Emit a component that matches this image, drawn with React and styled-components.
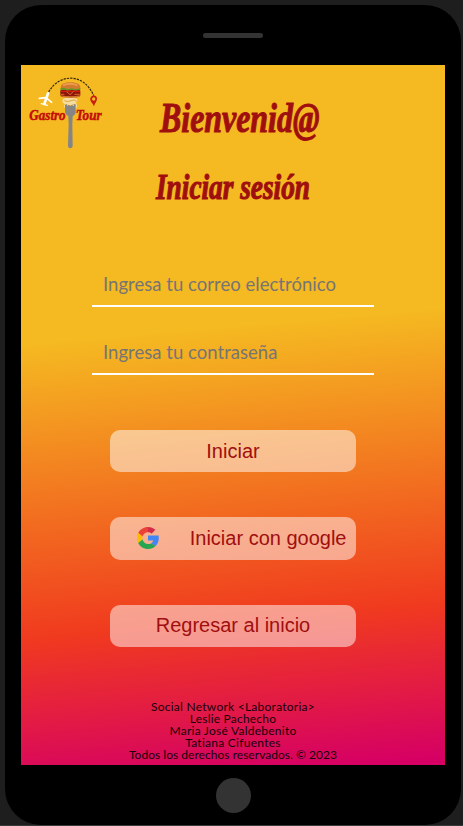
import React from "react";
import styled, { createGlobalStyle } from "styled-components";

const GlobalStyle = createGlobalStyle`
  * { box-sizing: border-box; }
  body { margin: 0; background: #1e1e1e; overflow: hidden; }
`;

const Stage = styled.div`
  width: 463px;
  height: 826px;
  padding: 5px 2px 0 5px;
  background: #1e1e1e;
  border-bottom: 1px solid #383838;
`;

const Phone = styled.div`
  width: 456px;
  height: 820px;
  display: grid;
  grid-template-rows: 60px 700px 60px;
  padding: 0 16px;
  border-radius: 36px;
  background: #000;
`;

const Bezel = styled.div`
  display: flex;
  align-items: center;
  justify-content: center;
`;

const Speaker = styled.div`
  width: 60px;
  height: 5px;
  border-radius: 3px;
  background: #333;
`;

const HomeButton = styled.div`
  width: 35px;
  height: 35px;
  border-radius: 50%;
  background: #333;
`;

const Screen = styled.main`
  display: flex;
  flex-direction: column;
  align-items: center;
  overflow: hidden;
  background: linear-gradient(175deg, #f5b921 38%, #f03a1f 78%, #d60064 99%);
`;

const Header = styled.header`
  width: 100%;
  height: 95px;
  display: flex;
  gap: 40px;
`;

const Logo = styled.svg`
  width: 99px;
  height: 95px;
  flex: none;
`;

const Heading = styled.h1`
  margin: 0;
  width: ${(p) => p.$width}px;
  height: ${(p) => p.$height}px;
  padding-top: ${(p) => p.$top}px;
  color: #a00f0f;
  font: italic 700 ${(p) => p.$size}px/1 "Liberation Serif", serif;
  white-space: nowrap;
  -webkit-text-stroke: 1.1px #a00f0f;
`;

const Condensed = styled.span`
  display: inline-block;
  transform: scaleX(${(p) => p.$scale});
  transform-origin: left center;
`;

const Form = styled.form`
  width: 282px;
  display: flex;
  flex-direction: column;
  gap: 24px;
  margin-top: 67px;
`;

const Field = styled.input`
  width: 282px;
  height: 44px;
  padding: 0 10px 0 11px;
  border: 0;
  border-bottom: 2px solid #fff;
  border-radius: 0;
  outline: 0;
  background: transparent;
  font: 18.5px "Lato", sans-serif;
  letter-spacing: 0.03px;
  &::placeholder { color: #757575; opacity: 1; }
`;

const Actions = styled.div`
  display: flex;
  flex-direction: column;
  gap: 45px;
  margin-top: 55px;
`;

const Button = styled.button`
  width: 246px;
  height: ${(p) => (p.$icon ? 43 : 42)}px;
  display: flex;
  align-items: center;
  justify-content: ${(p) => (p.$icon ? "space-between" : "center")};
  padding: ${(p) => (p.$icon ? "0 9.5px 0 27px" : "0")};
  border: 0;
  border-radius: 10px;
  background: rgba(255, 255, 255, 0.5);
  color: #a00f0f;
  font: 20px "Liberation Sans", Arial, sans-serif;
  white-space: nowrap;
  &:last-child { padding-bottom: 1px; }
`;

const GoogleMark = styled.svg`
  width: 22px;
  height: 22px;
  margin-bottom: 1px;
`;

const Footer = styled.footer`
  margin-top: 54px;
  display: flex;
  flex-direction: column;
  align-items: center;
  color: #170009;
  font: 12px/12px "Lato", sans-serif;
`;

const Credit = styled.span`
  height: 12px;
  letter-spacing: ${(p) => p.$tracking}px;
  white-space: nowrap;
`;

const LogoWord = styled.text`
  font: italic 700 46px "Liberation Serif", serif;
  fill: #c40c08;
  stroke: #c40c08;
  stroke-width: 1.5px;
`;

function GastroLogo() {
  return (
    <Logo viewBox="3 0 297 285" role="img" aria-label="Gastro Tour">
      <path d="M86 81C117 25 192 23 221 92" fill="none" stroke="#34270c" strokeWidth="3.5" strokeDasharray="7 3" />
      <g fill="none" stroke="#fff" strokeLinecap="round">
        <path d="M84 85L73 117" strokeWidth="8" />
        <path d="M58 100L78 98L95 112" strokeWidth="5" strokeLinejoin="round" />
        <path d="M64 116L82 121" strokeWidth="4" />
      </g>
      <path d="M222 124c-4-9-13-16-11-24 3-11 19-11 20 0 1 8-7 15-9 24z" fill="#c81e0e" />
      <circle cx="221" cy="102" r="5" fill="#f5b921" />
      <path d="M129 102c8-6 32-6 42 0 3 5 0 9-4 11 6 5 5 15-1 19h-27c-7-2-9-11-3-15-8-2-11-9-7-15z" fill="#f5dda0" />
      <path d="M133 107q10 6 20 0t17 2M139 120q12 5 26-2" fill="none" stroke="#dda73f" strokeWidth="3" />
      <rect x="121" y="73" width="60" height="22" rx="6" fill="#8a160c" />
      <path d="M122 68c0-9 7-16 29-16s30 7 30 16v5h-59z" fill="#d27a30" />
      <path d="M129 61q20-9 43 0" fill="none" stroke="#ed9b4c" strokeWidth="6" />
      <path d="M121 73l10-2 12 4 12-3 11 3 15-3" fill="none" stroke="#609c24" strokeWidth="5" />
      <path d="M123 79h57" stroke="#d5190e" strokeWidth="4" />
      <path d="M140 80l10 9 10-9M123 88h10m30 0h16" fill="none" stroke="#d76b21" strokeWidth="3" />
      <path d="M122 91q29 6 60 0c-1 5-8 8-29 8s-29-3-31-8z" fill="#ce7430" />
      <path d="M135 119l6-1v5h4v-3h4v3h5v-3h4v3h4v-5h5v22c0 8-5 10-9 14l-1 25 1 63c0 10-14 10-14 0l2-63-1-26c-6-3-10-7-10-15z" fill="#858585" />
      <LogoWord x="28" y="165" textLength="109" lengthAdjust="spacingAndGlyphs">Gastro</LogoWord>
      <LogoWord x="167" y="165" textLength="78" lengthAdjust="spacingAndGlyphs">Tour</LogoWord>
    </Logo>
  );
}

function GoogleIcon() {
  return (
    <GoogleMark viewBox="0 0 48 48" aria-hidden="true">
      <path fill="#EA4335" d="M24 0C14.62 0 6.51 5.38 2.56 13.22l9.5 7.4C13.6 15.2 18.1 11.5 24 11.5z" />
      <path fill="#D42C48" d="M24 11.5c3.2 0 5.6 1 7.9 3L40.06 6.25C35.9 2.38 30.47 0 24 0z" />
      <path fill="#4285F4" d="M47.5 24.55c0-2.2-.15-4-.5-6H24v11h11.5c-.7 2.6-2.1 4.4-4.3 5.7l8.69 6.94c4.51-4.18 7.61-10.36 7.61-17.64z" />
      <path fill="#FBBC05" d="M12.06 27.4A12 12 0 0 1 11.5 24c0-1.2.2-2.3.56-3.38l-9.5-7.4A23.92 23.92 0 0 0 0 24c0 3.88.92 7.54 2.56 10.78z" />
      <path fill="#27A552" d="M24 48c6.48 0 11.93-2.13 15.89-5.81l-8.69-6.94c-2 1.4-4.4 2.1-7.2 2.1-5.9 0-10.3-4.45-11.94-9.95l-9.5 7.38C6.51 42.62 14.62 48 24 48z" />
    </GoogleMark>
  );
}

const credits = [
  ["Social Network <Laboratoria>", 0.25],
  ["Leslie Pachecho", 0.2],
  ["Maria José Valdebenito", 0.25],
  ["Tatiana Cifuentes", 0.27],
  ["Todos los derechos reservados. © 2023", 0.03],
];

export default function App() {
  return (
    <Stage>
      <GlobalStyle />
      <Phone>
        <Bezel><Speaker /></Bezel>
        <Screen>
          <Header>
            <GastroLogo />
            <Heading $size={43} $top={31} $height={77} $width={162}>
              <Condensed $scale={0.742}>Bienvenid@</Condensed>
            </Heading>
          </Header>
          <Heading as="h2" $size={35} $top={10} $height={36} $width={154}>
            <Condensed $scale={0.78}>Iniciar sesión</Condensed>
          </Heading>
          <Form>
            <Field type="email" placeholder="Ingresa tu correo electrónico" />
            <Field type="password" placeholder="Ingresa tu contraseña" />
          </Form>
          <Actions>
            <Button>Iniciar</Button>
            <Button $icon><GoogleIcon />Iniciar con google</Button>
            <Button>Regresar al inicio</Button>
          </Actions>
          <Footer>
            {credits.map(([text, tracking]) => (
              <Credit key={text} $tracking={tracking}>{text}</Credit>
            ))}
          </Footer>
        </Screen>
        <Bezel><HomeButton /></Bezel>
      </Phone>
    </Stage>
  );
}
